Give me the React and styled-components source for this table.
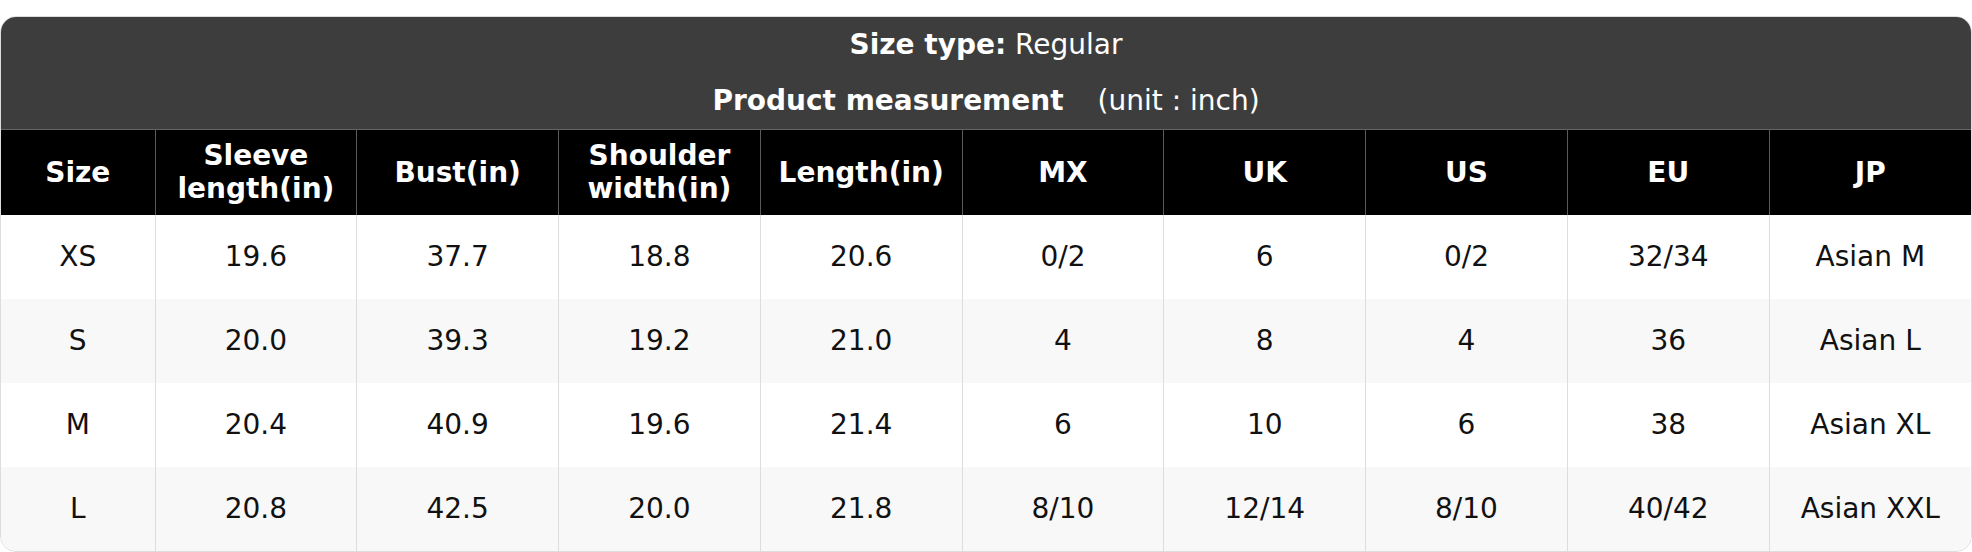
import styled, { createGlobalStyle } from "styled-components";

const GlobalStyle = createGlobalStyle`
  body {
    margin: 0;
    background: #ffffff;
    font-family: "DejaVu Sans", "Liberation Sans", sans-serif;
  }
`;

const columns = [
  "Size",
  "Sleeve length(in)",
  "Bust(in)",
  "Shoulder width(in)",
  "Length(in)",
  "MX",
  "UK",
  "US",
  "EU",
  "JP",
];

const rows = [
  ["XS", "19.6", "37.7", "18.8", "20.6", "0/2", "6", "0/2", "32/34", "Asian M"],
  ["S", "20.0", "39.3", "19.2", "21.0", "4", "8", "4", "36", "Asian L"],
  ["M", "20.4", "40.9", "19.6", "21.4", "6", "10", "6", "38", "Asian XL"],
  ["L", "20.8", "42.5", "20.0", "21.8", "8/10", "12/14", "8/10", "40/42", "Asian XXL"],
];

const SizeChart = () => (
  <Card>
    <ChartHeader>
      <HeaderLine>
        <strong>Size type:</strong> Regular
      </HeaderLine>
      <HeaderLine>
        <strong>Product measurement</strong>
        <Unit>(unit : inch)</Unit>
      </HeaderLine>
    </ChartHeader>
    <Table>
      <colgroup>
        <FirstCol />
        {columns.slice(1).map((c) => (
          <col key={c} />
        ))}
      </colgroup>
      <thead>
        <HeadRow>
          {columns.map((c) => (
            <HeadCell key={c}>{c}</HeadCell>
          ))}
        </HeadRow>
      </thead>
      <tbody>
        {rows.map((r, i) => (
          <BodyRow key={r[0]} $striped={i % 2 === 1}>
            {r.map((v, j) => (
              <Cell key={j}>{v}</Cell>
            ))}
          </BodyRow>
        ))}
      </tbody>
    </Table>
  </Card>
);

const App = () => (
  <>
    <GlobalStyle />
    <SizeChart />
  </>
);

const Card = styled.section`
  margin-top: 16px;
  border: 1px solid #dddddd;
  border-radius: 16px;
  overflow: hidden;
  background: #ffffff;
`;

Card.displayName = "Card";

const ChartHeader = styled.header`
  background: #3d3d3d;
  color: #ffffff;
  padding: 11px 0 12px;
  display: flex;
  flex-direction: column;
  align-items: center;
  gap: 22px;
`;

ChartHeader.displayName = "ChartHeader";

const HeaderLine = styled.div`
  font-size: 28px;
  line-height: 1.2;

  strong {
    font-weight: 700;
  }
`;

HeaderLine.displayName = "HeaderLine";

const Unit = styled.span`
  margin-left: 34px;
`;

Unit.displayName = "Unit";

const Table = styled.table`
  width: 100%;
  border-collapse: collapse;
  table-layout: fixed;
  font-size: 28px;
  line-height: 1.2;
`;

Table.displayName = "Table";

const FirstCol = styled.col`
  width: 154px;
`;

const HeadRow = styled.tr`
  height: 85px;
  background: #000000;
`;

HeadRow.displayName = "HeadRow";

const HeadCell = styled.th`
  border: 1px solid #5a5a5a;
  border-top: 1px solid #666666;
  border-bottom: 0;
  color: #ffffff;
  font-weight: 700;
  padding: 0 8px;
  text-align: center;
  vertical-align: middle;

  &:first-child {
    border-left: 0;
  }
  &:last-child {
    border-right: 0;
  }
`;

HeadCell.displayName = "HeadCell";

const BodyRow = styled.tr`
  height: 84px;
  background: ${(p) => (p.$striped ? "#f8f8f8" : "#ffffff")};
`;

BodyRow.displayName = "BodyRow";

const Cell = styled.td`
  border-right: 1px solid #dddddd;
  color: #111111;
  padding: 0 8px;
  text-align: center;
  vertical-align: middle;

  &:last-child {
    border-right: 0;
  }
`;

Cell.displayName = "Cell";

export default App;
